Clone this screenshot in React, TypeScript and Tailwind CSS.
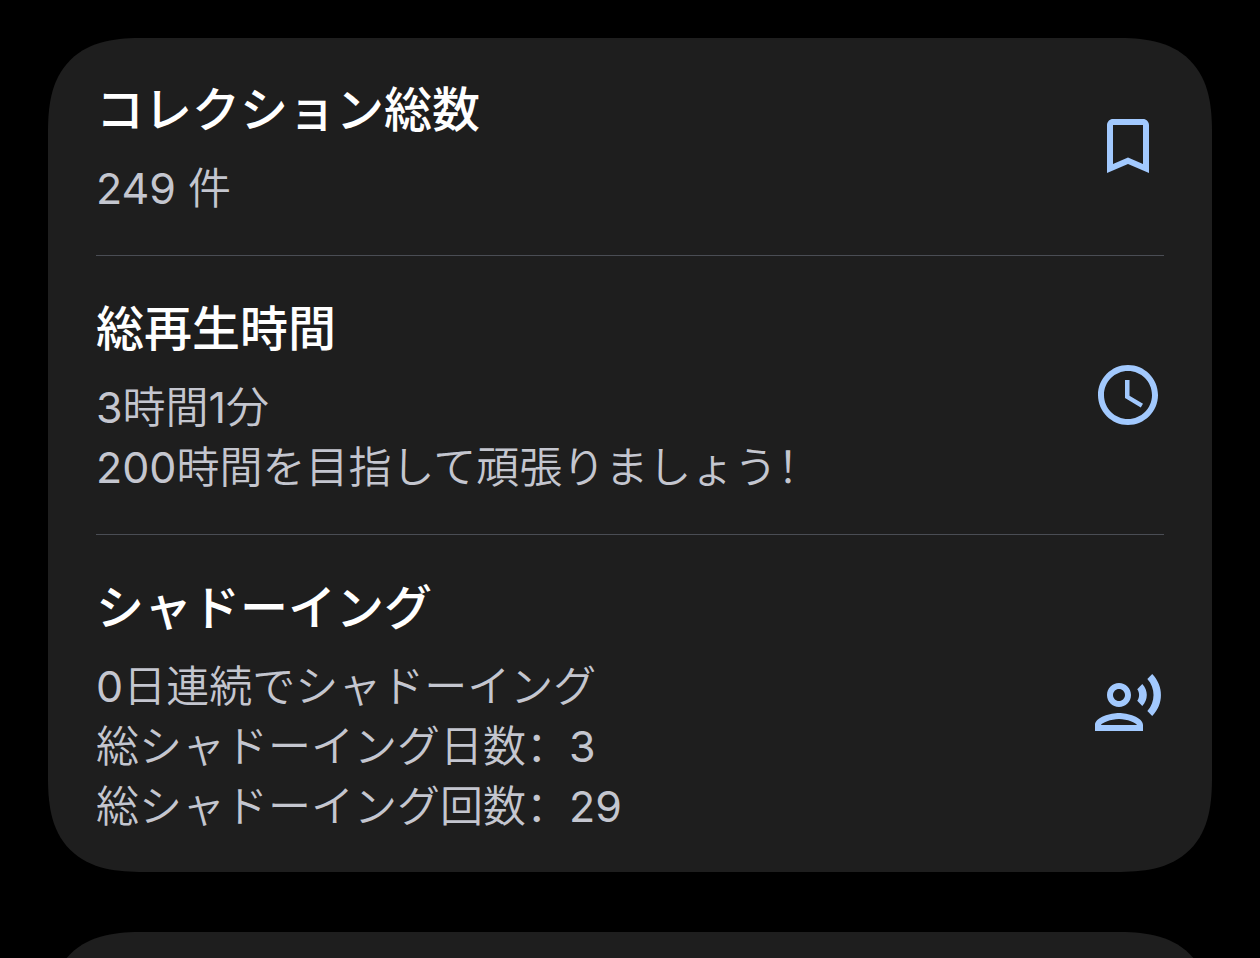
import React from "react";

type Stat = { title: string; lines: string[]; icon: React.ReactNode };

const stats: Stat[] = [
  {
    title: "コレクション総数",
    lines: ["249 件"],
    icon: <path d="M17 3H7c-1.1 0-2 .9-2 2v16l7-3 7 3V5c0-1.1-.9-2-2-2zm0 15-5-2.18L7 18V5h10v13z" />,
  },
  {
    title: "総再生時間",
    lines: ["3時間1分", "200時間を目指して頑張りましょう！"],
    icon: (
      <path d="M11.99 2C6.47 2 2 6.48 2 12s4.47 10 9.99 10C17.52 22 22 17.52 22 12S17.52 2 11.99 2zM12 20c-4.42 0-8-3.58-8-8s3.58-8 8-8 8 3.58 8 8-3.58 8-8 8zm.5-13H11v6l5.25 3.15.75-1.23-4.5-2.67z" />
    ),
  },
  {
    title: "シャドーイング",
    lines: ["0日連続でシャドーイング", "総シャドーイング日数：3", "総シャドーイング回数：29"],
    icon: (
      <path d="M9 13c2.21 0 4-1.79 4-4s-1.79-4-4-4-4 1.79-4 4 1.79 4 4 4zm0-6c1.1 0 2 .9 2 2s-.9 2-2 2-2-.9-2-2 .9-2 2-2zm0 8c-2.67 0-8 1.34-8 4v2h16v-2c0-2.66-5.33-4-8-4zm-6 4c.22-.72 3.31-2 6-2 2.7 0 5.8 1.29 6 2H3zM15.08 7.05c.84 1.18.84 2.71 0 3.89l1.68 1.69c2.02-2.02 2.02-5.07 0-7.27l-1.68 1.69zM20.07 2l-1.63 1.63c2.77 3.02 2.77 7.56 0 10.74L20.07 16c3.9-3.89 3.91-9.95 0-14z" />
    ),
  },
];

const cardClass =
  "shrink-0 bg-[#1e1e1e] rounded-[75px] supports-[corner-shape:squircle]:rounded-[96px] [corner-shape:superellipse(1.4)]";

// Digits are a step heavier than the Japanese text. Full-width punctuation
// uses the Chinese forms, which sit at the left of their cell.
function Line({ text }: { text: string }) {
  return (
    <p>
      {text.split(/([：！]|\d+)/).map((part, i) => {
        if (i % 2 === 0) return part;
        return /\d/.test(part) ? (
          <span key={i} className="font-normal">
            {part}
          </span>
        ) : (
          <span key={i} lang="zh-CN">
            {part}
          </span>
        );
      })}
    </p>
  );
}

function StatRow({ title, lines, icon }: Stat) {
  return (
    <section className="flex items-center justify-between py-9">
      <div className="flex flex-col gap-3">
        <h2 className="text-5xl/[72px] font-medium text-white">{title}</h2>
        <div className="text-[43px]/[60px] font-[350] text-[#c4c6cf]">
          {lines.map((line) => (
            <Line key={line} text={line} />
          ))}
        </div>
      </div>
      <svg viewBox="0 0 24 24" className="size-18 shrink-0 fill-[#a2c9fe]" aria-hidden="true">
        {icon}
      </svg>
    </section>
  );
}

export default function App() {
  return (
    <main
      lang="ja"
      className="flex h-screen flex-col gap-15 overflow-hidden bg-black px-12 pt-[38px] font-[Inter,'Noto_Sans_CJK_SC',sans-serif]"
    >
      <div className={`${cardClass} px-12`}>
        {stats.map((stat, i) => (
          <React.Fragment key={stat.title}>
            {i > 0 && <hr className="my-px border-t border-[#4a4d54]" />}
            <StatRow {...stat} />
          </React.Fragment>
        ))}
      </div>
      <div className={`${cardClass} h-64`} />
    </main>
  );
}
